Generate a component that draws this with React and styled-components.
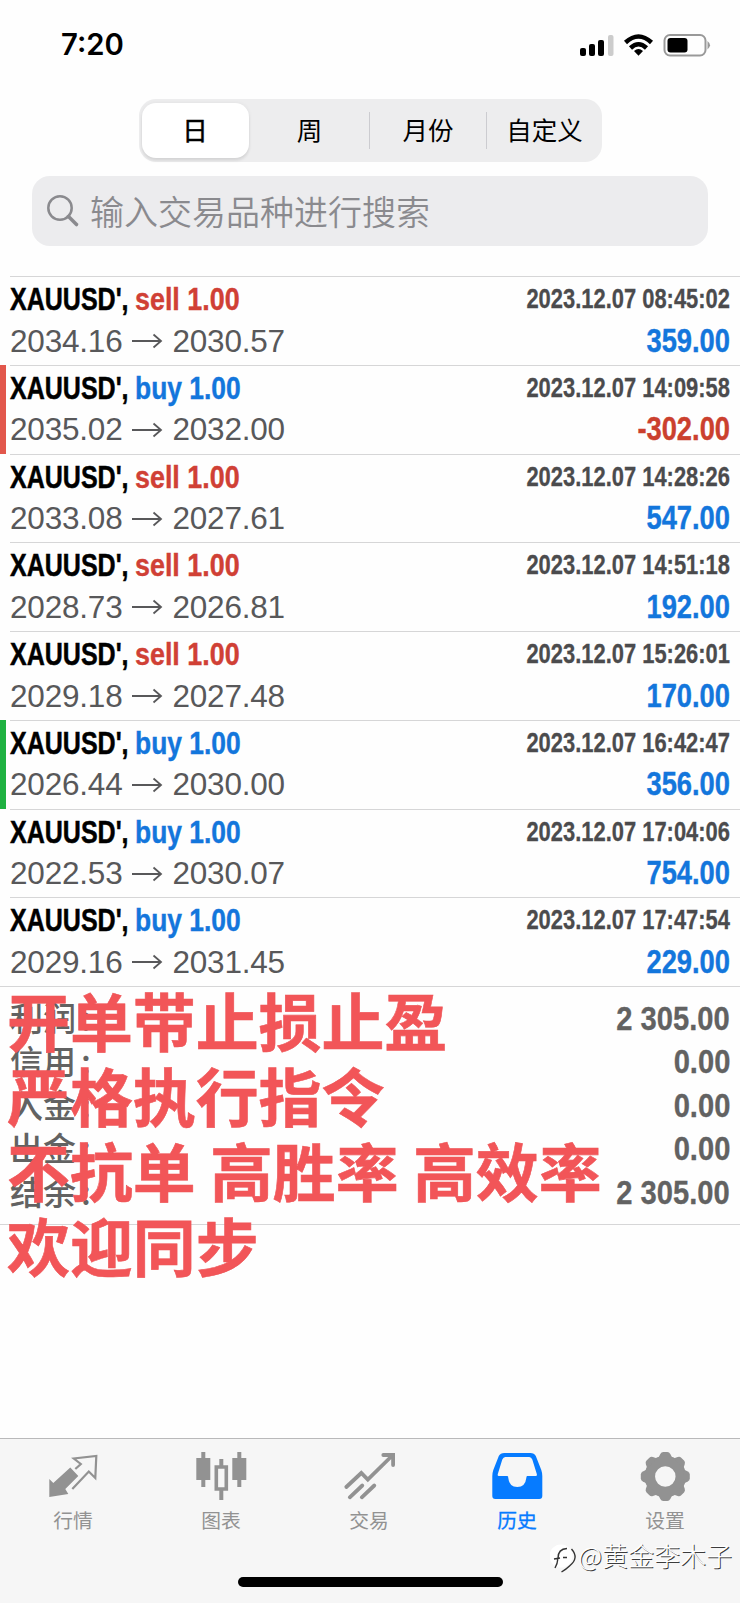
import React from "react";
import styled, { createGlobalStyle } from "styled-components";

const cjk = `"Noto Sans CJK SC", sans-serif`;
const sans = `"Liberation Sans", ${cjk}`;

const GlobalStyle = createGlobalStyle`
  * { box-sizing: border-box; }
  body { margin: 0; background: #fefefe; }
`;

const Screen = styled.div`
  position: relative;
  display: flex;
  flex-direction: column;
  width: 740px;
  height: 1603px;
  overflow: hidden;
  background: #fefefe;
  font-family: ${sans};
`;

const StatusBar = styled.header`
  display: flex;
  justify-content: space-between;
  align-items: center;
  height: 99px;
  padding: 0 28px 9px 61px;
`;

const Clock = styled.time`
  font: 600 29.3px/36px Inter, sans-serif;
  color: #000;
`;

const StatusIcons = styled.svg`
  display: block;
  width: 134px;
  height: 26px;
`;

const Segments = styled.nav`
  display: grid;
  grid-template-columns: 107px 120px 117px 116px;
  width: 463px;
  height: 63px;
  margin: 0 auto;
  padding: 4px 0 4px 3px;
  border-radius: 17px;
  background: #ededee;
`;

const Segment = styled.button`
  display: flex;
  justify-content: center;
  border: 0;
  border-left: 1px solid ${(p) => (p.$divided ? "#ccccd0" : "transparent")};
  padding: ${(p) => (p.$active ? "9px 1px 0 0" : "0 0 0 1px")};
  height: ${(p) => (p.$active ? "55px" : "37px")};
  margin-top: ${(p) => (p.$active ? 0 : "9px")};
  border-radius: ${(p) => (p.$active ? "14px" : 0)};
  font: 400 25.5px/37px ${cjk};
  -webkit-text-stroke: ${(p) => (p.$active ? "0.5px #000" : "0")};
  color: #000;
  background: ${(p) => (p.$active ? "#fff" : "transparent")};
  background-clip: border-box;
  box-shadow: ${(p) => (p.$active ? "0 3px 3px rgba(0,0,0,.08), 0 0 4px rgba(0,0,0,.06)" : "none")};
`;

const SegmentText = styled.span`
  margin-top: -2px;
`;

const Search = styled.label`
  display: flex;
  align-items: center;
  gap: 10px;
  height: 70px;
  margin: 14px 32px 0;
  padding: 0 15px 0 14px;
  border-radius: 18px;
  background: #ececee;
  color: #8a8a8e;
`;

const SearchIcon = styled.svg`
  width: 34px;
  height: 34px;
`;

const SearchText = styled.span`
  font: 350 34px/50px ${cjk};
  color: #8a8a8e;
`;

const Deals = styled.ul`
  list-style: none;
  margin: 30px 0 0;
  padding: 0;
`;

const Deal = styled.li`
  display: flex;
  gap: 4px;
  height: 88.75px;
`;

const Marker = styled.div`
  width: 6px;
  background: ${(p) => p.$color || "transparent"};
`;

const DealBody = styled.div`
  flex: 1;
  display: grid;
  grid-template-columns: 1fr auto;
  grid-template-rows: 47.7px 33px;
  padding-right: 10px;
  border-top: 1px solid #d6d6d7;
`;

const Title = styled.div`
  display: flex;
  font: 700 32px/44.6px ${sans};
`;

const Symbol = styled.span`
  width: 125px;
  white-space: nowrap;
  color: #000;
  transform: scaleX(0.782);
  transform-origin: left;
  -webkit-text-stroke: 0.5px;
`;

const Side = styled.span`
  white-space: nowrap;
  color: ${(p) => (p.$side === "buy" ? "#1376dc" : "#d04035")};
  transform: scaleX(${(p) => (p.$side === "buy" ? 0.825 : 0.84)});
  transform-origin: left;
  -webkit-text-stroke: 0.4px;
`;

const Stamp = styled.time`
  justify-self: end;
  width: 202px;
  display: flex;
  justify-content: flex-end;
  font: 700 27px/44.6px ${sans};
  white-space: nowrap;
  color: #4b4b4d;
  transform: scaleX(0.812);
  transform-origin: right;
  -webkit-text-stroke: 0.3px;
`;

const Prices = styled.div`
  display: flex;
  align-items: center;
  gap: 9.5px;
  font-size: 31.5px;
  letter-spacing: -0.2px;
  line-height: 33px;
  color: #58585a;
`;

const Arrow = styled.svg`
  width: 31px;
  height: 16px;
`;

const Profit = styled.div`
  font: 700 32.4px/33.6px ${sans};
  text-align: right;
  color: ${(p) => (p.$loss ? "#cb402e" : "#1376dc")};
  transform: scaleX(0.843);
  transform-origin: right;
  -webkit-text-stroke: 0.4px;
`;

const Summary = styled.dl`
  margin: 0;
  height: 238.5px;
  padding: 10px 10px 0;
  border-top: 1px solid #d6d6d7;
  border-bottom: 1px solid #d6d6d7;
`;

const SummaryRow = styled.div`
  display: flex;
  justify-content: space-between;
  height: 43.4px;
`;

const SummaryLabel = styled.dt`
  display: flex;
  gap: 5px;
  font: 500 33px/41px ${cjk};
  color: #626262;
`;

const SummaryValue = styled.dd`
  margin: 0;
  font: 700 33.6px/43px ${sans};
  color: #626262;
  transform: scaleX(0.868);
  transform-origin: right;
  -webkit-text-stroke: 0.3px;
`;

const Slogan = styled.div`
  position: absolute;
  left: 7px;
  top: 980.5px;
  font: 700 62.9px/75.3px ${cjk};
  color: #f25558;
  -webkit-text-stroke: 0.6px #ee5659;
  white-space: pre;
`;

const TabBar = styled.nav`
  display: grid;
  grid-template-columns: repeat(5, 1fr);
  height: 165px;
  margin-top: auto;
  border-top: 1px solid #b9b9ba;
  background: #f6f6f6;
`;

const Tab = styled.a`
  display: flex;
  flex-direction: column;
  align-items: center;
  padding-top: 13px;
  font: 400 19.8px/28px ${cjk};
  color: ${(p) => (p.$active ? "#067bff" : "#929292")};
`;

const TabIcon = styled.svg`
  width: 54px;
  height: 54px;
`;

const TabLabel = styled.span`
  margin-right: 2px;
  -webkit-text-stroke: ${(p) => (p.$active ? "0.3px" : "0")};
`;

const HomeIndicator = styled.div`
  position: absolute;
  left: 238px;
  top: 1577px;
  width: 265px;
  height: 10px;
  border-radius: 5px;
  background: #000;
`;

const Watermark = styled.div`
  position: absolute;
  right: 8px;
  top: 1536px;
  display: flex;
  align-items: center;
  font: 300 26px/36px ${cjk};
  color: #fff;
  text-shadow: 1px 1px 0 #3c3c3c;
`;

const WatermarkLogo = styled.svg`
  width: 28px;
  height: 38px;
`;

const deals = [
  ["sell", "2034.16", "2030.57", "08:45:02", "359.00"],
  ["buy", "2035.02", "2032.00", "14:09:58", "-302.00", "#e2574c"],
  ["sell", "2033.08", "2027.61", "14:28:26", "547.00"],
  ["sell", "2028.73", "2026.81", "14:51:18", "192.00"],
  ["sell", "2029.18", "2027.48", "15:26:01", "170.00"],
  ["buy", "2026.44", "2030.00", "16:42:47", "356.00", "#1fb141"],
  ["buy", "2022.53", "2030.07", "17:04:06", "754.00"],
  ["buy", "2029.16", "2031.45", "17:47:54", "229.00"],
];

const totals = [
  ["利润", "2 305.00"],
  ["信用", "0.00"],
  ["入金", "0.00"],
  ["出金", "0.00"],
  ["结余", "2 305.00"],
];

const gearTeeth = [0, 45, 90, 135, 180, 225, 270, 315];

const tabs = [
  {
    label: "行情",
    icon: (
      <>
        <path d="M3 45V27l4 4 17-15.500 8 8.500-13 13 3 5z" fill="currentColor" />
        <path d="M29 17l5.500-5-7-5.500L50 4l-1 22-6.500-6.500L26 37" fill="none" stroke="currentColor" strokeWidth="2.200" />
      </>
    ),
  },
  {
    label: "图表",
    icon: (
      <g fill="currentColor">
        <path d="M2 6h14v22H2zM7 0h4v35H7zM38 6h14v22H38zM43 0h4v35h-4zM25 7h4v7h-4zM25 38h4v10h-4z" />
        <path d="M22 15h10v22H22z" fill="none" stroke="currentColor" strokeWidth="3.600" />
      </g>
    ),
  },
  {
    label: "交易",
    icon: (
      <path
        d="M4 35L19 21l6.500 6.500L50 3.500M41 3h9.800v10M7.500 45.300L20 33.500M19.500 45.300L32 33.500"
        fill="none"
        stroke="currentColor"
        strokeWidth="3.800"
        strokeLinecap="round"
      />
    ),
  },
  {
    label: "历史",
    active: true,
    icon: (
      <path
        fillRule="evenodd"
        fill="currentColor"
        d="M14 1h26q4 0 5.500 3L51 18q1 3 1 6v20q0 3-3 3H5q-3 0-3-3V24q0-3 1-6L8.500 4Q10 1 14 1zM15 5q-2 0-3 2.500L7.500 22q-.5 2 1 2H17q1 0 1 2 1 9 9 9t9-9q0-2 1-2h8.500q1.500 0 1-2L42 7.500Q41 5 39 5z"
      />
    ),
  },
  {
    label: "设置",
    icon: (
      <>
        <circle cx="27" cy="24.500" r="15.500" fill="none" stroke="currentColor" strokeWidth="10.500" />
        {gearTeeth.map((a) => (
          <path key={a} d="M20 6l2-4q1-2 3-2h4q2 0 3 2l2 4z" fill="currentColor" transform={`rotate(${a} 27 24.500)`} />
        ))}
      </>
    ),
  },
];

export default function App() {
  return (
    <Screen>
      <GlobalStyle />
      <StatusBar>
        <Clock>7:20</Clock>
        <StatusIcons viewBox="0 0 134 26">
          <rect x="2" y="16" width="6" height="8" rx="2" />
          <rect x="11" y="12" width="6" height="12" rx="2" />
          <rect x="20" y="8" width="6" height="16" rx="2" />
          <rect x="30" y="3" width="5.500" height="21" rx="2" fill="#ccc" />
          <g fill="none" stroke="#000" strokeWidth="4.500">
            <path d="M47.500 10.500Q60.500-1.500 73.500 10.500" />
            <path d="M52.500 16Q60.500 8.500 68.500 16" />
          </g>
          <path d="M56 19q4.500-4 9 0l-4.500 4.800z" />
          <rect x="86.500" y="3" width="41" height="20.500" rx="5.500" fill="none" stroke="#999" strokeWidth="2" />
          <rect x="89.500" y="6" width="20" height="14.500" rx="3" />
          <path d="M129.500 9q5 4.200 0 8.400z" fill="#999" />
        </StatusIcons>
      </StatusBar>

      <Segments>
        <Segment $active>
          <SegmentText>日</SegmentText>
        </Segment>
        <Segment>
          <SegmentText>周</SegmentText>
        </Segment>
        <Segment $divided>
          <SegmentText>月份</SegmentText>
        </Segment>
        <Segment $divided>
          <SegmentText>自定义</SegmentText>
        </Segment>
      </Segments>

      <Search>
        <SearchIcon viewBox="0 0 34 34" fill="none" stroke="currentColor">
          <circle cx="14" cy="14" r="11.700" strokeWidth="2.500" />
          <path d="M22.500 22.500l8 8" strokeWidth="3.600" strokeLinecap="round" />
        </SearchIcon>
        <SearchText>输入交易品种进行搜索</SearchText>
      </Search>

      <Deals>
        {deals.map(([side, from, to, time, profit, mark]) => (
          <Deal key={time}>
            <Marker $color={mark} />
            <DealBody>
              <Title>
                <Symbol>XAUUSD',</Symbol>
                <Side $side={side}>{side} 1.00</Side>
              </Title>
              <Stamp>2023.12.07 {time}</Stamp>
              <Prices>
                {from}
                <Arrow viewBox="0 0 31 16" fill="none" stroke="currentColor" strokeWidth="1.800">
                  <path d="M0 8h29M21.500 1.500L29 8l-7.500 6.500" />
                </Arrow>
                {to}
              </Prices>
              <Profit $loss={profit.startsWith("-")}>{profit}</Profit>
            </DealBody>
          </Deal>
        ))}
      </Deals>

      <Summary>
        {totals.map(([label, value]) => (
          <SummaryRow key={label}>
            <SummaryLabel>
              {label}
              <span>:</span>
            </SummaryLabel>
            <SummaryValue>{value}</SummaryValue>
          </SummaryRow>
        ))}
      </Summary>

      <TabBar>
        {tabs.map((t) => (
          <Tab key={t.label} $active={t.active}>
            <TabIcon viewBox="0.7 0 54 54">{t.icon}</TabIcon>
            <TabLabel $active={t.active}>{t.label}</TabLabel>
          </Tab>
        ))}
      </TabBar>

      <Slogan>{"开单带止损止盈\n严格执行指令\n不抗单 高胜率 高效率\n欢迎同步"}</Slogan>
      <HomeIndicator />
      <Watermark>
        <WatermarkLogo viewBox="0 -3 28 38">
          <circle cx="11" cy="17" r="11.500" fill="#fff" />
          <path
            d="M5 29q2.500-4 3-10 0-9 9-9.500M4 20l6-1M13 18.500h4M21.500 10q8 9-2 17-3 3-8 6"
            fill="none"
            stroke="#333"
            strokeWidth="1.400"
          />
        </WatermarkLogo>
        @黄金李木子
      </Watermark>
    </Screen>
  );
}
